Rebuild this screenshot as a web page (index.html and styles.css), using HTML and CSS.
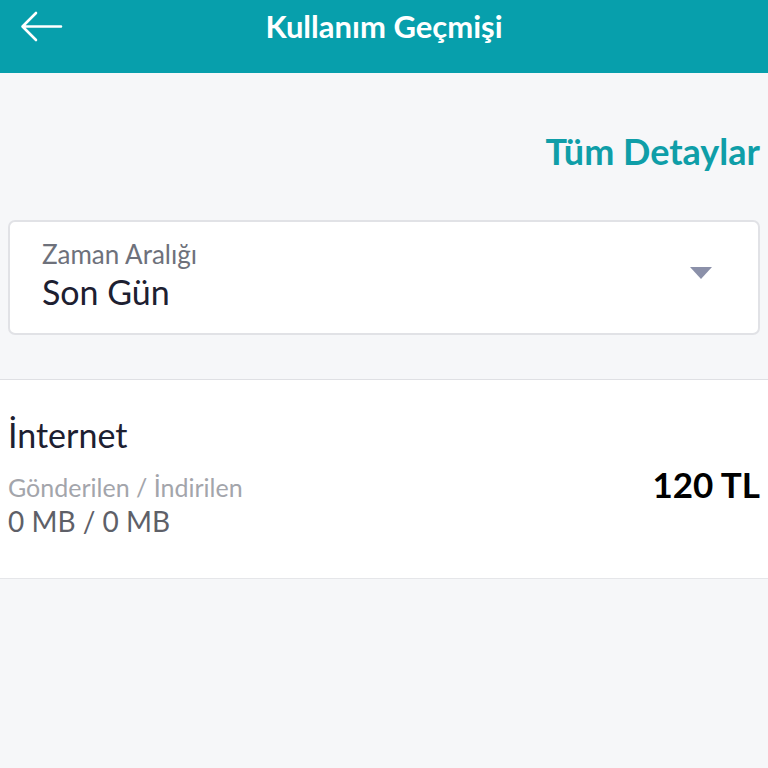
FILE: index.html
```html
<!DOCTYPE html>
<html lang="tr">
<head>
	<meta charset="UTF-8">
	<title>Kullanım Geçmişi</title>
	<link rel="stylesheet" href="styles.css">
</head>
<body>
	<!-- üst bar -->
	<div class="topbar">
		<a class="back" href="javascript:">
			<svg width="44" height="32" viewBox="0 0 44 32">
				<path d="M42 15.5H4M17 2L3.5 15.5L17 29" fill="none" stroke="#fff" stroke-width="2.6" stroke-linecap="round" stroke-linejoin="round"/>
			</svg>
		</a>
		<h1>Kullanım Geçmişi</h1>
	</div>

	<div class="content">
		<div class="links">
			<a href="javascript:">Tüm Detaylar</a>
		</div>
		<!-- zaman aralığı seçimi -->
		<div class="select">
			<div class="select-text">
				<span class="label">Zaman Aralığı</span>
				<span class="value">Son Gün</span>
			</div>
			<span class="caret"></span>
		</div>
	</div>

	<!-- kullanım listesi -->
	<div class="usage">
		<div class="usage-left">
			<div class="usage-title">İnternet</div>
			<div class="usage-sub">Gönderilen / İndirilen</div>
			<div class="usage-amount">0 MB / 0 MB</div>
		</div>
		<div class="usage-price">120 TL</div>
	</div>
</body>
</html>
```

FILE: styles.css
```css
html, body {
	margin: 0;
	padding: 0;
	background: #f6f7f9;
	font-family: "Lato", "Noto Sans", sans-serif;
}
.topbar {
	height: 73px;
	background: #079fac;
	display: flex;
	justify-content: center;
	position: relative;
}
.topbar h1 {
	margin: 0;
	padding-top: 8px;
	color: #fff;
	font-size: 31px;
	font-weight: 700;
	line-height: 36px;
}
.back {
	position: absolute;
	left: 19px;
	top: 11px;
	display: block;
}
.content {
	padding: 0 8px 44px;
}
.links {
	display: flex;
	justify-content: flex-end;
	padding-top: 56px;
}
.links a {
	color: #0f9ea8;
	font-size: 36px;
	font-weight: 700;
	text-decoration: none;
	line-height: 44px;
}
.select {
	margin-top: 47px;
	height: 115px;
	box-sizing: border-box;
	background: #fff;
	border: 2px solid #e1e2e6;
	border-radius: 7px;
	display: flex;
	align-items: center;
	padding: 0 46px 0 32px;
}
.select-text {
	flex: 1;
	display: flex;
	flex-direction: column;
	margin-top: -2px;
}
.label {
	color: #6e717b;
	font-size: 26px;
	line-height: 30px;
}
.value {
	color: #1d2031;
	font-size: 34px;
	line-height: 46px;
}
.caret {
	width: 0;
	height: 0;
	border-left: 11px solid transparent;
	border-right: 11px solid transparent;
	border-top: 12px solid #8b90a9;
	margin-bottom: 10px;
}
.usage {
	background: #fff;
	border-top: 1px solid #dfe0e4;
	border-bottom: 1px solid #e5e6e9;
	height: 198px;
	padding: 0 8px;
	display: flex;
	justify-content: space-between;
	align-items: center;
}
.usage-left {
	margin-top: -4px;
}
.usage-title {
	color: #1d2031;
	font-size: 34px;
	line-height: 40px;
	margin-bottom: 16px;
}
.usage-sub {
	color: #a3a5ab;
	font-size: 25px;
	line-height: 32px;
}
.usage-amount {
	color: #5e6068;
	font-size: 28px;
	line-height: 36px;
}
.usage-price {
	color: #000;
	font-size: 35px;
	font-weight: 700;
	margin-top: 10px;
}
```
